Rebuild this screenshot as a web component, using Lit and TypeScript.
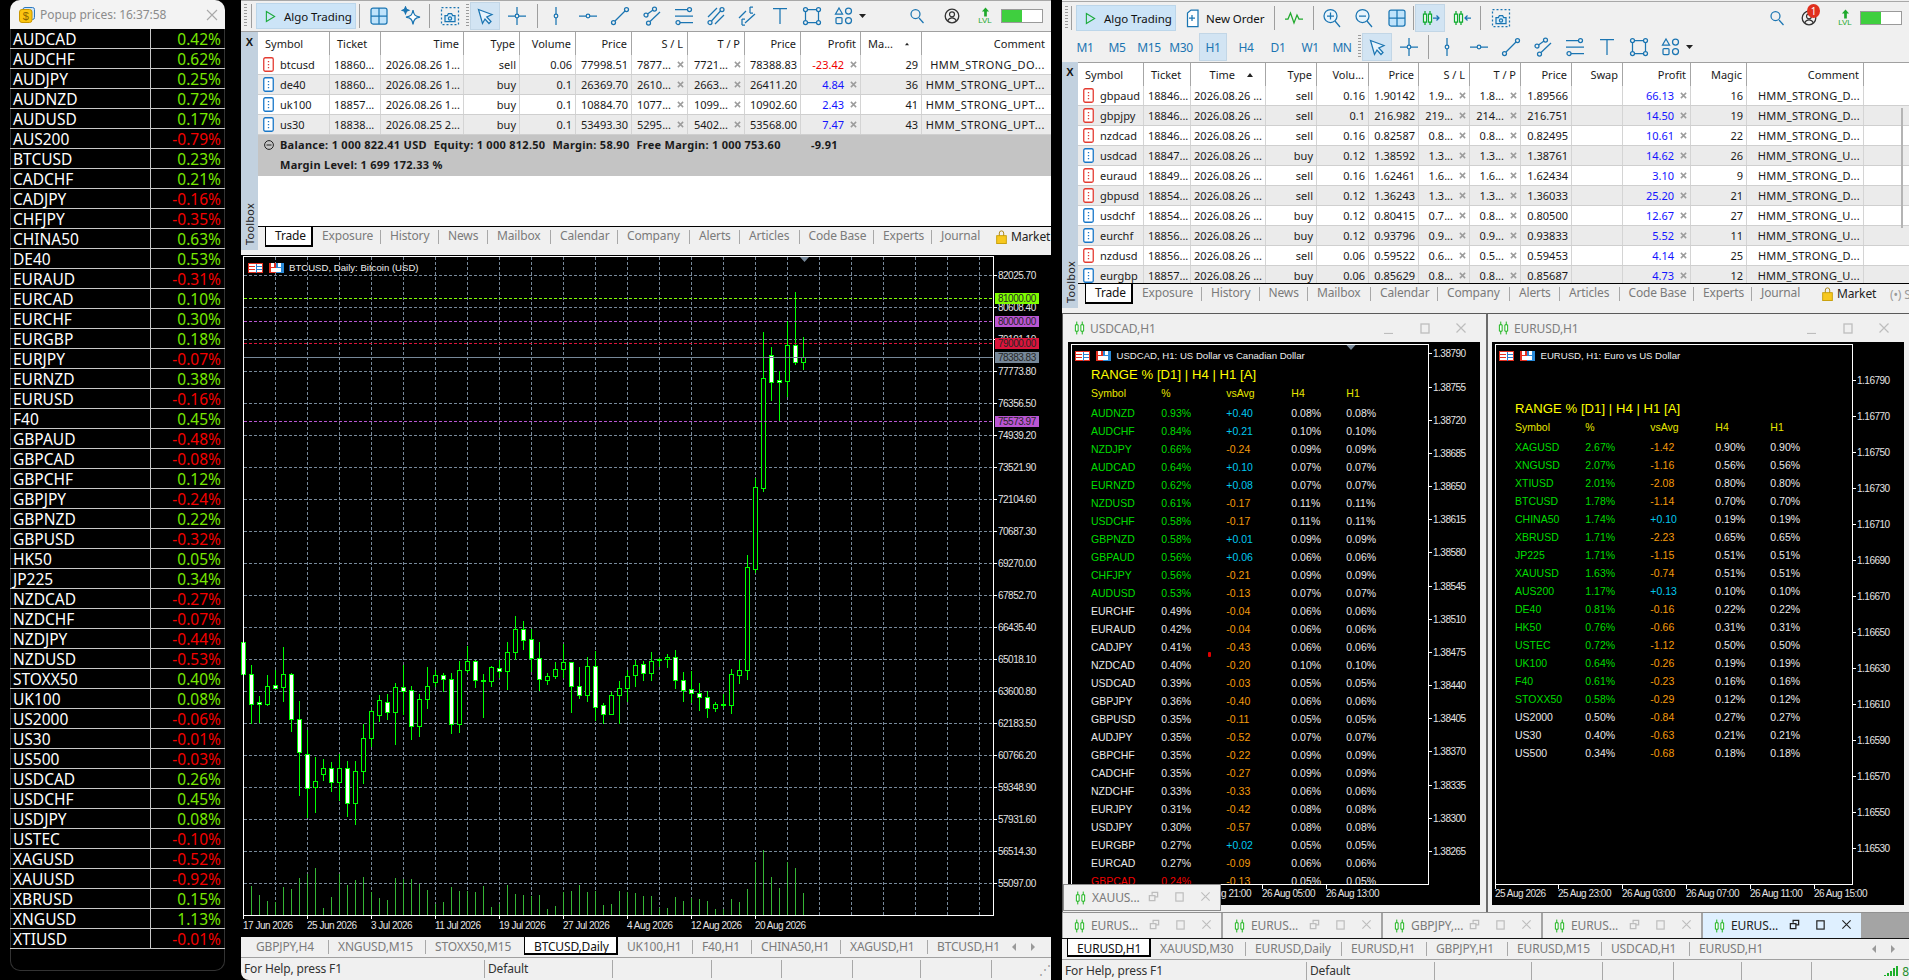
import { LitElement, html, svg, css, nothing } from "lit";
import { customElement } from "lit/decorators.js";

type Row = string[];
const popup: [string, string][] = ([
  ["AUDCAD","0.42"],["AUDCHF","0.62"],["AUDJPY","0.25"],["AUDNZD","0.72"],["AUDUSD","0.17"],["AUS200","-0.79"],["BTCUSD","0.23"],["CADCHF","0.21"],["CADJPY","-0.16"],["CHFJPY","-0.35"],["CHINA50","0.63"],["DE40","0.53"],["EURAUD","-0.31"],["EURCAD","0.10"],["EURCHF","0.30"],["EURGBP","0.18"],["EURJPY","-0.07"],["EURNZD","0.38"],["EURUSD","-0.16"],["F40","0.45"],["GBPAUD","-0.48"],["GBPCAD","-0.08"],["GBPCHF","0.12"],["GBPJPY","-0.24"],["GBPNZD","0.22"],["GBPUSD","-0.32"],["HK50","0.05"],["JP225","0.34"],["NZDCAD","-0.27"],["NZDCHF","-0.07"],["NZDJPY","-0.44"],["NZDUSD","-0.53"],["STOXX50","0.40"],["UK100","0.08"],["US2000","-0.06"],["US30","-0.01"],["US500","-0.03"],["USDCAD","0.26"],["USDCHF","0.45"],["USDJPY","0.08"],["USTEC","-0.10"],["XAGUSD","-0.52"],["XAUUSD","-0.92"],["XBRUSD","0.15"],["XNGUSD","1.13"],["XTIUSD","-0.01"],
] as [string,string][]);

const leftRows: Row[] = [
  ["btcusd","18860...","2026.08.26 1...","sell","0.06","77998.51","7877...","7721...","78388.83","-23.42","29","HMM_STRONG_DO..."],
  ["de40","18860...","2026.08.26 1...","buy","0.1","26369.70","2610...","2663...","26411.20","4.84","36","HMM_STRONG_UPT..."],
  ["uk100","18857...","2026.08.26 1...","buy","0.1","10884.70","1077...","1099...","10902.60","2.43","41","HMM_STRONG_UPT..."],
  ["us30","18838...","2026.08.25 2...","buy","0.1","53493.30","5295...","5402...","53568.00","7.47","43","HMM_STRONG_UPT..."],
];
const rightRows: Row[] = [
  ["gbpaud","18846...","sell","0.16","1.90142","1.9...","1.8...","1.89566","66.13","16","D"],
  ["gbpjpy","18846...","sell","0.1","216.982","219...","214...","216.751","14.50","19","D"],
  ["nzdcad","18846...","sell","0.16","0.82587","0.8...","0.8...","0.82495","10.61","22","D"],
  ["usdcad","18847...","buy","0.12","1.38592","1.3...","1.3...","1.38761","14.62","26","U"],
  ["euraud","18849...","sell","0.16","1.62461","1.6...","1.6...","1.62434","3.10","9","D"],
  ["gbpusd","18854...","sell","0.12","1.36243","1.3...","1.3...","1.36033","25.20","21","D"],
  ["usdchf","18854...","buy","0.12","0.80415","0.7...","0.8...","0.80500","12.67","27","U"],
  ["eurchf","18856...","buy","0.12","0.93796","0.9...","0.9...","0.93833","5.52","11","U"],
  ["nzdusd","18856...","sell","0.06","0.59522","0.6...","0.5...","0.59453","4.14","25","D"],
  ["eurgbp","18857...","buy","0.06","0.85629","0.8...","0.8...","0.85687","4.73","12","U"],
];

// wickTop, bodyTop, bodyBottom, wickBottom, white?  (crop units: page y = 610 + v / 3)
const candles: [number,number,number,number,number][] = [
[90,100,196,200,1],[168,196,286,344,1],[262,280,286,342,1],[198,232,286,290,0],[184,229,238,240,1],[114,196,235,278,0],[192,196,331,368,1],[276,331,430,560,1],[364,434,538,626,1],[444,517,535,612,0],[450,478,496,516,0],[460,478,520,548,1],[436,478,520,576,0],[456,478,583,624,1],[456,487,583,648,0],[344,388,487,525,0],[304,307,388,414,0],[258,274,319,340,0],[256,278,310,332,1],[222,235,310,408,0],[168,235,247,318,1],[232,244,352,392,1],[256,271,352,384,0],[174,232,271,300,0],[184,199,220,235,0],[192,199,211,250,1],[192,211,346,375,1],[156,184,346,372,0],[112,157,184,192,0],[154,157,214,236,1],[195,214,217,326,1],[172,175,217,234,0],[154,178,187,208,1],[98,130,187,244,0],[22,61,130,152,0],[36,61,94,122,1],[60,91,148,190,1],[98,148,211,246,1],[192,202,214,228,0],[160,181,202,210,0],[106,160,181,208,0],[160,160,232,312,1],[174,232,259,270,1],[144,172,259,278,0],[126,172,295,336,1],[282,289,316,344,1],[248,259,316,318,0],[216,238,259,344,0],[182,202,238,278,0],[152,169,199,234,0],[156,166,193,216,1],[128,157,193,216,0],[148,151,154,174,1],[136,145,151,178,0],[124,145,214,240,1],[190,214,244,278,1],[186,241,253,282,1],[222,253,265,306,1],[246,265,298,326,1],[280,286,298,308,0],[256,286,289,298,1],[180,196,289,314,0],[154,184,199,224,0],
[-162,-126,184,214,0],[-393,-366,-120,-108,0],[-831,-693,-363,-351,0],[-786,-761,-680,-624,1],[-714,-687,-681,-564,1],[-864,-792,-685,-636,0],[-952,-792,-742,-732,1],[-816,-756,-741,-716,0],
];
const volumes = [832,858,876,880,835,840,808,796,778,897,864,796,828,813,805,848,867,873,808,811,811,824,843,885,880,834,846,846,849,832,894,885,828,855,858,861,858,900,891,849,846,828,849,846,888,885,846,849,852,861,861,897,897,864,876,867,870,876,900,900,870,880,840,760,724,804,837,758,777,852];

const rangeA: string[][] = `AUDNZD 0.93 +0.40 0.08 g
AUDCHF 0.84 +0.21 0.10 g
NZDJPY 0.66 -0.24 0.09 g
AUDCAD 0.64 +0.10 0.07 g
EURNZD 0.62 +0.08 0.07 g
NZDUSD 0.61 -0.17 0.11 g
USDCHF 0.58 -0.17 0.11 g
GBPNZD 0.58 +0.01 0.09 g
GBPAUD 0.56 +0.06 0.06 g
CHFJPY 0.56 -0.21 0.09 g
AUDUSD 0.53 -0.13 0.07 g
EURCHF 0.49 -0.04 0.06 w
EURAUD 0.42 -0.04 0.06 w
CADJPY 0.41 -0.43 0.06 w
NZDCAD 0.40 -0.20 0.10 w
USDCAD 0.39 -0.03 0.05 w
GBPJPY 0.36 -0.40 0.06 w
GBPUSD 0.35 -0.11 0.05 w
AUDJPY 0.35 -0.52 0.07 w
GBPCHF 0.35 -0.22 0.09 w
CADCHF 0.35 -0.27 0.09 w
NZDCHF 0.33 -0.33 0.06 w
EURJPY 0.31 -0.42 0.08 w
USDJPY 0.30 -0.57 0.08 w
EURGBP 0.27 +0.02 0.05 w
EURCAD 0.27 -0.09 0.06 w
GBPCAD 0.24 -0.13 0.05 r`.split("\n").map((s) => s.split(" "));
const rangeB: string[][] = `XAGUSD 2.67 -1.42 0.90 g
XNGUSD 2.07 -1.16 0.56 g
XTIUSD 2.01 -2.08 0.80 g
BTCUSD 1.78 -1.14 0.70 g
CHINA50 1.74 +0.10 0.19 g
XBRUSD 1.71 -2.23 0.65 g
JP225 1.71 -1.15 0.51 g
XAUUSD 1.63 -0.74 0.51 g
AUS200 1.17 +0.13 0.10 g
DE40 0.81 -0.16 0.22 g
HK50 0.76 -0.66 0.31 g
USTEC 0.72 -1.12 0.50 g
UK100 0.64 -0.26 0.19 g
F40 0.61 -0.23 0.16 g
STOXX50 0.58 -0.29 0.12 g
US2000 0.50 -0.84 0.27 w
US30 0.40 -0.63 0.21 w
US500 0.34 -0.68 0.18 w`.split("\n").map((s) => s.split(" "));

const dot = (cx: number, cy: number, r = 2) => svg`<circle cx=${cx} cy=${cy} r=${r} fill="none"/>`;
const paths = (d: string) => svg`<path d=${d} fill="none"/>`;
const icons: Record<string, unknown> = {
  grid: svg`<rect x="2" y="2" width="16" height="16" rx="2" fill="#bfe3fb"/>${paths("M10 2v16M2 10h16")}`,
  spark: svg`<path d="M12 4C12.8 9 14 10.4 19 11.2 14 12 12.8 13.4 12 18.5 11.2 13.4 10 12 5 11.2 10 10.4 11.2 9 12 4Z" fill="#fff"/><path d="M4.5 1l1 2.3 2.3 1-2.3 1-1 2.3-1-2.3-2.3-1 2.3-1z" fill="currentColor"/>`,
  camera: svg`<rect x="1.5" y="1.5" width="17" height="17" fill="none" stroke-dasharray="2 2"/><path d="M5 9.5h2.4l1-2h3.2l1 2H15v6H5z" fill="#d9effc"/>${dot(10, 12.5, 1.6)}`,
  arrow: svg`<path d="M3.5 3.5L17 8.5 11.8 11 16 15.5 14 17.5 10 13 7.5 17.5z" fill="#e8f4fc"/>`,
  cross: svg`${dot(10, 10, 1.8)}${paths("M10 1v7M10 12v7M1 10h7M12 10h7")}`,
  vline: svg`${dot(10, 10, 1.8)}${paths("M10 1v7M10 12v7")}`,
  hline: svg`${dot(10, 10, 1.8)}${paths("M1 10h7M12 10h7")}`,
  trend: svg`${dot(3.5, 16.5)}${dot(16.5, 3.5)}${paths("M5 15L15 5")}`,
  chan: svg`${dot(12.5, 3)}${dot(4, 9)}${paths("M5.5 8L11 4")}${dot(6.5, 17)}${paths("M8 15.5L18 6")}`,
  fib: svg`${dot(15.5, 3.5)}${dot(4, 16.5)}${paths("M1 3.5h12.5M1 10h18M6 16.5h13")}`,
  par: svg`${dot(16, 3.5)}${dot(4, 16.5)}${paths("M14.5 5L5.5 15M2 11L11 2M9 18L18 9")}`,
  equi: svg`${paths("M1 12L8 5M7 17L17 8M12 1v6M15 1h-3M15 7h-3M4 13v6M7 13H4M7 19H4")}`,
  text: svg`${paths("M3 2.5h14M10 2.5V18")}`,
  rect: svg`${dot(3.5, 3.5)}${dot(16.5, 3.5)}${dot(3.5, 16.5)}${dot(16.5, 16.5)}${paths("M5.5 3.5h9M5.5 16.5h9M3.5 5.5v9M16.5 5.5v9")}`,
  shapes: svg`${paths("M5 2L8.5 8h-7z")}${dot(14.5, 5, 3)}<rect x="2" y="11.5" width="6" height="6" rx="1" fill="none"/>${dot(14.5, 14.5, 3)}`,
  search: svg`${dot(8.5, 8, 4.5)}${paths("M12 12l4.5 5")}`,
  zin: svg`<circle cx="8.5" cy="8" r="6.5" fill="#e8f4fc"/>${paths("M13 13l5 6M5 8h7M8.5 4.5v7")}`,
  zout: svg`<circle cx="8.5" cy="8" r="6.5" fill="#e8f4fc"/>${paths("M13 13l5 6M5 8h7")}`,
  neworder: svg`<path d="M4.5 5V18.5H15V2H8z" fill="#fff"/>${paths("M6 10h6M9 7v6")}`,
  wave: svg`<path d="M1 11h3l2.500-6 3.500 10 3-8 2 4h4"/>`,
  shiftr: svg`<path d="M5 3v14M10 3v14" stroke="#0eaa2d"/><path d="M3.500 6h3v8h-3zM8.500 6h3v8h-3z" fill="#fff" stroke="#0eaa2d"/><path d="M13 10h6M16.500 7.500L19 10l-2.500 2.500"/>`,
  shiftl: svg`<path d="M3 3v14M8 3v14" stroke="#0eaa2d"/><path d="M1.500 6h3v8h-3zM6.500 6h3v8h-3z" fill="#fff" stroke="#0eaa2d"/><path d="M18 10h-6M14.500 7.500L12 10l2.500 2.500"/>`,
};
const icon = (name: string) => html`<svg class="g" viewBox="0 0 20 20">${icons[name]}</svg>`;
const cell = (name: string, cls = "") => html`<span class="ic ${cls}">${icon(name)}</span>`;
const grip = html`<span class="grip"></span>`;
const dd = html`<svg class="dd" viewBox="0 0 7 4"><path d="M0 0h7L3.5 4z" fill="#222"/></svg>`;
const play = html`<svg class="play" viewBox="0 0 12 14"><path d="M1.5 1.5L10.5 7 1.5 12.5z" fill="none" stroke="#1cab3c" stroke-width="1.2"/></svg>`;
const candleIcon = html`<svg class="cdl" viewBox="0 0 12 14"><path d="M3 0v14M9 0v14" stroke="#0db00d"/><path d="M1.5 3.5h3v7h-3zM7.5 3.5h3v7h-3z" fill="#fff" stroke="#0db00d"/></svg>`;
const xMark = html`<svg class="xm" viewBox="0 0 8 8"><path d="M1 1l6 6M7 1L1 7" stroke="#9c9c9c" stroke-width="1.7"/></svg>`;
const lock = html`<svg class="lock" viewBox="0 0 12 16"><path d="M3.5 7V3.5a2.5 2.5 0 015 0V7" fill="none" stroke="#a57c00"/><rect x=".5" y="6.5" width="11" height="9" fill="#f7c81e" stroke="#c49a00"/></svg>`;
const lvl = (cls: string) => html`<span class="lvl ${cls}"><svg viewBox="0 0 10 10"><path d="M5 0l4 4.5H6.5V10h-3V4.5H1z" fill="#1fa92c"/></svg><b>LVL</b></span>`;
const toggle = (cls: string) => html`<span class="toggle ${cls}"><i></i></span>`;
const userIcon = html`<svg class="user" viewBox="0 0 16 16"><circle cx="8" cy="8" r="6.8" fill="none" stroke="#333" stroke-width="1.3"/><circle cx="8" cy="6.3" r="2.5" fill="none" stroke="#333" stroke-width="1.2"/><path d="M3.6 13c1-2.6 2.6-3.2 4.4-3.2s3.400.6 4.400 3.200" fill="none" stroke="#333" stroke-width="1.2"/></svg>`;

@customElement("app-root")
export class AppRoot extends LitElement {
  static styles = css`
    :host { display:block; width:1909px; height:980px; background:#000; overflow:hidden; font-family:"Noto Sans","Open Sans",sans-serif; font-size:11px; color:#1a1a1a; }
    svg { display:block; }
    .root { display:flex; height:980px; }

    .popup { width:215px; height:971px; margin:0 16px 0 10px; box-sizing:border-box; border:1px solid #333; border-top:0; border-radius:10px; flex:none; }
    .ptitle { height:29px; margin:0 -1px; background:#f3f3f3; border-radius:10px 10px 0 0; display:flex; align-items:center; color:#8b8b8b; font-size:12px; letter-spacing:-.05px; }
    .coin { width:16px; height:16px; margin:0 5px 0 9px; flex:none; }
    .coin text { font-size:11px; fill:#8a6400; }
    .ptitle span { flex:1; }
    .pclose { width:14px; height:14px; margin-right:6px; }
    .prow { display:grid; grid-template-columns:141px 1fr; height:20px; box-sizing:border-box; border-bottom:1px solid #c8c8c8; font-size:15.5px; line-height:21px; color:#fff; margin:0 -1px; }
    .prow div:first-child { padding-left:3px; border-right:1px solid #c8c8c8; height:19px; }
    .prow div:last-child { text-align:right; padding-right:4px; height:19px; }
    .prow .up { color:#76e800; }
    .prow .down { color:#f40000; }

    .term { background:#f0f0f0; display:flex; flex-direction:column; height:980px; flex:none; overflow:hidden; }
    .tl { width:810px; margin-right:11px; border-radius:0 0 0 8px; }
    .tr { width:847px; }
    .bar { display:flex; align-items:center; flex:none; color:#1b75b2; box-sizing:border-box; }
    .bar.tb { height:32px; border-top:1px solid #a8a8a8; border-bottom:1px solid #a0a0a0; }
    .bar.b1 { height:31px; border-top:1px solid #a8a8a8; margin-top:1px; padding-top:2px; }
    .bar.b2 { height:30px; padding-left:7px; }
    .ic { width:32px; height:28px; display:flex; align-items:center; justify-content:center; flex:none; box-sizing:border-box; }
    .ic.on { background:#d2e4f3; border:1px solid #c2d6e6; width:30px; margin:0 1px; }
    .ic.wide { width:38px; color:#1fa92c; }
    .ic.w34 { width:34px; }
    .g { width:20px; height:20px; stroke:currentColor; stroke-width:1.25; fill:none; }
    .sep { width:1px; height:24px; background:#9e9e9e; flex:none; }
    .grip { width:3px; height:24px; flex:none; background-image:repeating-linear-gradient(#9a9a9a 0 1px, transparent 1px 3px); }
    .dd { width:7px; height:4px; flex:none; margin-left:-1px; }
    .btn { height:26px; display:flex; align-items:center; color:#111; font-size:11.5px; letter-spacing:-.05px; flex:none; box-sizing:border-box; white-space:nowrap; }
    .btn.algo { background:#cce4f7; border:1px solid #bcd6ea; width:100px; gap:8px; padding-left:8px; }
    .btn.no { margin-left:-3px; }
    .play { width:11px; height:13px; flex:none; }
    .grow { flex:1; }
    .user { width:16px; height:16px; }
    .lvl { width:22px; display:flex; flex-direction:column; align-items:center; color:#1fa92c; flex:none; }
    .lvl svg { width:9px; height:10px; }
    .lvl b { font:400 8px/8px "Liberation Sans",sans-serif; }
    .toggle { width:42px; height:14px; border:1px solid #9a9a9a; background:#fff; box-sizing:border-box; flex:none; display:block; margin-right:8px; }
    .toggle.r7 { margin-right:7px; }
    .toggle i { display:block; width:50%; height:100%; background:#3fcf3f; }
    .badge { position:absolute; left:6px; top:-6px; width:13px; height:14px; border-radius:50%; background:#e0301e; color:#fff; font-size:10px; line-height:14px; text-align:center; }
    .userwrap { position:relative; width:16px; height:16px; flex:none; }
    .per { font-size:12px; letter-spacing:-.4px; }
    .per.on { width:28px; margin:0 3px 0 2px; }

    .m1 { margin-left:1px; } .m2 { margin-left:2px; } .m3 { margin-left:3px; } .m4 { margin-left:4px; } .m5 { margin-left:5px; } .m8 { margin-left:8px; } .m10 { margin-left:10px; } .m11 { margin-left:11px; } .m14 { margin-left:14px; } .m17 { margin-left:17px; }

    .dock { display:flex; flex:none; }
    .tl .dock { height:223px; }
    .tr .dock { height:251px; }
    .strip { width:17px; background:#c2d1df; flex:none; margin-bottom:5px; display:flex; flex-direction:column; justify-content:space-between; align-items:center; }
    .tr .strip { width:16px; }
    .strip b { font:700 11px/12px "Liberation Sans",sans-serif; color:#111; margin-top:4px; }
    .strip span { writing-mode:vertical-rl; transform:rotate(180deg); font-size:11px; letter-spacing:.2px; color:#222; margin-bottom:5px; line-height:11px; }
    .panel { flex:1; min-width:0; display:flex; flex-direction:column; }
    .area { flex:1; min-height:0; background:#fff; overflow:hidden; position:relative; }
    .tr .area { border-top:1px solid #a0a0a0; }

    .row { display:grid; height:20px; box-sizing:border-box; align-items:stretch; line-height:19px; }
    .lt { grid-template-columns:72px 51px 83px 56px 56px 56px 56px 57px 56px 60px 61px 127px; }
    .rt { grid-template-columns:66px 47px 75px 51px 52px 50px 51px 51px 51px 51px 68px 56px 117px; }
    .hd { height:23px; line-height:22px; border-bottom:0; }
    .body { border-bottom:1px solid #cfcfcf; }
    .body.alt { background:#ebebeb; }
    .c { border-right:1px solid #d4d4d4; text-align:right; padding:0 3px; white-space:nowrap; overflow:hidden; display:flex; justify-content:flex-end; align-items:center; box-sizing:border-box; }
    .hd .c { border-right-color:#a6a6a6; padding-right:4px; }
    .c.l { justify-content:flex-start; padding-left:4px; }
    .hd .c.l { padding-left:7px; }
    .c.sym { justify-content:flex-start; padding-left:5px; gap:6px; }
    .c.nb { border:0; }
    .c.cm { letter-spacing:.5px; padding-right:4px; }
    .rt .c.cm { letter-spacing:.25px; padding-right:3px; }
    .tk { width:11px; height:15px; flex:none; }
    .xm { width:7px; height:7px; flex:none; margin:0 3px 0 6px; }
    .c.px { padding-right:0; }
    .c .arr { width:6px; height:4px; margin:0 8px 0 12px; }
    .profit { color:#1414ff; }
    .neg { color:#f00000; }
    .scroll { position:absolute; left:823px; top:45px; width:2px; height:120px; background:#b4b4b4; }

    .sum { background:#c4c4c4; height:41px; font-weight:700; line-height:20px; position:relative; letter-spacing:.28px; }
    .sum div { display:flex; height:20px; padding-left:22px; white-space:nowrap; }
    .sum span { margin-right:7px; }
    .sum svg { position:absolute; left:6px; top:5px; width:10px; height:10px; }
    .sum .tot { position:absolute; left:553px; top:0; }

    .tabs { display:flex; height:20px; flex:none; position:relative; color:#7b7b7b; font-size:12px; line-height:18px; letter-spacing:-.15px; }
    .dock .tabs { border-top:1px solid #000; margin-bottom:9px; padding-left:7px; }
    .tl .dock .tabs { height:20px; margin-bottom:8px; }
    .tab { box-sizing:border-box; flex:none; padding-left:9px; white-space:nowrap; position:relative; }
    .tab.sp::after { content:""; position:absolute; right:0; top:3px; bottom:3px; width:1px; background:#a8a8a8; }
    .tab.act { color:#111; background:#fff; border:1px solid #000; border-width:0 2px 2px 1px; height:20px; }
    .bt { height:20px; border-bottom:1px solid #a0a0a0; box-sizing:content-box; line-height:18px; }
    .bt .tab.act { border-width:1px 2px 2px 1px; height:19px; margin-top:-1px; box-sizing:border-box; }
    .bt .tab { padding-top:1px; }
    .bt.p6 { padding-left:6px; }
    .bt.p5 { padding-left:5px; }
    .arrows { position:absolute; display:flex; gap:15px; top:6px; }
    .arrows.a1 { left:771px; }
    .arrows.a2 { left:810px; }
    .arrows svg { width:4px; height:8px; }
    .market { position:absolute; top:3px; display:flex; align-items:center; gap:4px; color:#222; line-height:14px; }
    .market.a1 { left:738px; }
    .market.a2 { left:744px; }
    .lock { width:11px; height:14px; }
    .signal { position:absolute; color:#9a9a9a; top:2px; left:812px; white-space:nowrap; }

    .status { height:21px; display:flex; flex:none; font-size:12px; line-height:20px; color:#333; letter-spacing:-.15px; }
    .st { box-sizing:border-box; padding-left:3px; border-right:1px solid #a8a8a8; margin-top:2px; height:18px; flex:none; line-height:17px; white-space:nowrap; }
    .st.last { border:0; flex:1; display:flex; justify-content:flex-end; gap:3px; align-items:center; }
    .corner { color:#999; }
    .eight { color:#1f8f2c; }

    .mdi { flex:none; height:625px; display:flex; flex-direction:column; position:relative; }
    .wins { height:599px; display:flex; flex:none; }
    .win { border-top:1px solid #5a5a5a; border-left:1px solid #5a5a5a; box-sizing:border-box; padding-left:5px; flex:none; height:599px; background:#f0f0f0; width:424px; }
    .win + .win { width:423px; border-left:2px solid #6a6a6a; padding-left:4px; }
    .wt { height:28px; display:flex; align-items:center; font-size:12px; color:#7f7f7f; position:relative; gap:5px; padding-left:6px; letter-spacing:-.1px; }
    .cdl { width:11px; height:14px; flex:none; }
    .wb { width:12px; height:12px; flex:none; }
    .wbs { position:absolute; right:19px; top:8px; display:flex; gap:24px; color:#bdbdbd; }
    .minrow { height:26px; display:flex; gap:2px; background:#a4a4a4; border-top:1px solid #909090; flex:none; box-sizing:border-box; padding-left:1px; }
    .mint { width:158px; height:25px; background:#f0f0f0; display:flex; align-items:center; padding-left:11px; gap:6px; box-sizing:border-box; font-size:12px; flex:none; position:relative; letter-spacing:-.1px; color:#7a7a7a; }
    .mint.act { background:#dff0ff; color:#222; }
    .mint.float { position:absolute; left:1px; top:571px; border:1px solid #8c8c8c; height:27px; }
    .mint .wbs { right:9px; top:6px; gap:15px; }
    .mint.act .wbs { color:#222; }
    .mint .wb { width:11px; height:11px; }
    .darkline { height:1px; background:#111; flex:none; }

    .chart { flex:none; background:#000; }
    text { font-family:"Liberation Sans",sans-serif; }
    .ax { font-size:10px; fill:#e4e4e4; letter-spacing:-.5px; }
    .ttl { font-size:9.6px; fill:#eee; }
    .lab { font-size:10px; fill:#262626; letter-spacing:-.5px; }
    .rh { font-size:13.1px; fill:#ffff00; letter-spacing:.05px; }
    .rc { font-size:10.5px; }
    .fg { fill:#00dd00; } .fw { fill:#e8e8e8; } .fr { fill:#f00000; } .fy { fill:#e6e600; } .fo { fill:#f59a0c; } .fc { fill:#00c8f0; }
  `;

  tabs(items: [string, number][], active: number) {
    return items.slice(0, -1).map(([t, x], i) => {
      const w = items[i + 1][1] - x;
      const next = i + 1 < items.length - 1;
      const sp = i !== active && i + 1 !== active && next;
      return html`<span class="tab ${i === active ? "act" : ""} ${sp ? "sp" : ""}" style="width:${w}px">${t}</span>`;
    });
  }

  tkIcon(side: string) {
    const c = side === "sell" ? "#e43c32" : "#1877c8";
    return html`<svg class="tk" viewBox="0 0 11 15"><rect x=".75" y=".75" width="9.5" height="13.500" rx="1.500" fill="#fff" stroke=${c} stroke-width="1.3"/><path d="M5.500 4v1.200M5.500 7v1.200M5.500 10v1.200" stroke=${c} stroke-width="1.300"/></svg>`;
  }

  leftTable() {
    const hd = ["Symbol","Ticket","Time","Type","Volume","Price","S / L","T / P","Price","Profit"];
    return html`
      <div class="row lt hd">
        ${hd.map((h, i) => html`<div class="c ${i < 2 ? "l" : ""}">${h}</div>`)}
        <div class="c l">Ma...<svg class="arr" viewBox="0 0 6 4"><path d="M0 4h6L3 0z" fill="#222"/></svg></div>
        <div class="c nb">Comment</div>
      </div>
      ${leftRows.map((r, i) => html`<div class="row lt body ${i % 2 ? "alt" : ""}">
        <div class="c sym">${this.tkIcon(r[3])}${r[0]}</div>
        <div class="c l">${r[1]}</div>
        ${r.slice(2, 6).map((t) => html`<div class="c">${t}</div>`)}
        <div class="c px">${r[6]}${xMark}</div>
        <div class="c px">${r[7]}${xMark}</div>
        <div class="c">${r[8]}</div>
        <div class="c px"><span class=${r[9].startsWith("-") ? "neg" : "profit"}>${r[9]}</span>${xMark}</div>
        <div class="c">${r[10]}</div>
        <div class="c nb cm">${r[11]}</div>
      </div>`)}
      <div class="sum">
        <svg viewBox="0 0 10 10"><circle cx="5" cy="5" r="4.400" fill="none" stroke="#222"/><path d="M2.500 5h5" stroke="#222"/></svg>
        <div><span>Balance: 1 000 822.41 USD</span><span>Equity: 1 000 812.50</span><span>Margin: 58.90</span><span>Free Margin: 1 000 753.60</span><span class="tot">-9.91</span></div>
        <div>Margin Level: 1 699 172.33 %</div>
      </div>`;
  }

  rightTable() {
    const hd = ["Symbol","Ticket","Time","Type","Volu...","Price","S / L","T / P","Price","Swap","Profit","Magic","Comment"];
    return html`
      <div class="row rt hd">
        ${hd.map((h, i) => i === 2
          ? html`<div class="c">${h}<svg class="arr" viewBox="0 0 6 4"><path d="M0 4h6L3 0z" fill="#222"/></svg></div>`
          : html`<div class="c ${i < 2 ? "l" : ""}">${h}</div>`)}
      </div>
      ${rightRows.map((r, i) => html`<div class="row rt body ${i % 2 ? "alt" : ""}">
        <div class="c sym">${this.tkIcon(r[2])}${r[0]}</div>
        <div class="c l">${r[1]}</div>
        <div class="c">2026.08.26 ...</div>
        <div class="c">${r[2]}</div>
        <div class="c">${r[3]}</div>
        <div class="c">${r[4]}</div>
        <div class="c px">${r[5]}${xMark}</div>
        <div class="c px">${r[6]}${xMark}</div>
        <div class="c">${r[7]}</div>
        <div class="c"></div>
        <div class="c px"><span class="profit">${r[8]}</span>${xMark}</div>
        <div class="c">${r[9]}</div>
        <div class="c cm">HMM_STRONG_${r[10]}...</div>
      </div>`)}
      <div class="scroll"></div>`;
  }

  titleIcons(x: number, y: number) {
    return svg`
      <g shape-rendering="crispEdges">
        <rect x=${x + .5} y=${y + .5} width="14" height="9" fill="#fff" stroke="#e53020"/>
        <path d="M${x + 1} ${y + 3.500}h6M${x + 1} ${y + 6.500}h6" stroke="#e53020"/>
        <path d="M${x + 8} ${y + 1}v9M${x + 8} ${y + 3.500}h6M${x + 8} ${y + 6.500}h6" stroke="#2a7fd0"/>
        <rect x=${x + 21} y=${y} width="7" height="10" fill="#e53020"/>
        <rect x=${x + 28} y=${y} width="8" height="10" fill="#2a8ad8"/>
        <rect x=${x + 23} y=${y} width="3" height="4" fill="#fff"/>
        <rect x=${x + 30} y=${y} width="3" height="4" fill="#fff"/>
        <rect x=${x + 23} y=${y + 5} width="10" height="4" fill="#fff"/>
      </g>`;
  }

  grid(xs: number[], ys: number[], x0: number, x1: number, y0: number, y1: number) {
    const d = ys.map((y) => `M${x0} ${y + .5}H${x1}`).join("") + xs.map((x) => `M${x + .5} ${y0}V${y1}`).join("");
    return svg`<path d=${d} stroke="#778899" stroke-dasharray="3 2" fill="none" shape-rendering="crispEdges"/>`;
  }

  btcChart() {
    const ys = Array.from({ length: 20 }, (_, i) => 276 + 32 * i);
    const xs = Array.from({ length: 23 }, (_, i) => 275 + 32 * i);
    const prices = ["82025.70","80608.40","79191.10","77773.80","76356.50","74939.20","73521.90","72104.60","70687.30","69270.00","67852.70","66435.40","65018.10","63600.80","62183.50","60766.20","59348.90","57931.60","56514.30","55097.00"];
    const dates = ["17 Jun 2026","25 Jun 2026","3 Jul 2026","11 Jul 2026","19 Jul 2026","27 Jul 2026","4 Aug 2026","12 Aug 2026","20 Aug 2026"];
    const levels: [number, string, string][] = [[299,"#7fff00","81000.00"],[322,"#ba55d3","80000.00"],[344,"#dc143c","79000.00"],[422,"#ba55d3","75573.97"]];
    const Y = (v: number) => Math.round(610 + v / 3);
    return html`<svg class="chart" width="810" height="682" viewBox="241 256 810 682">
      ${this.grid(xs, ys, 244, 993, 258, 916)}
      <g shape-rendering="crispEdges">
        ${volumes.map((v, i) => svg`<rect x=${251 + 8 * i} y=${Y(v)} width="1" height=${916 - Y(v)} fill="#35b535"/>`)}
        ${candles.map((c, i) => {
          const x = 243 + 8 * i;
          const t = Y(c[1]), b = Y(c[2]);
          return svg`<rect x=${x} y=${Y(c[0])} width="1" height=${Y(c[3]) - Y(c[0])} fill="#00ff00"/>
            <rect x=${x - 1.5} y=${t + .5} width="4" height=${Math.max(b - t, 1)} fill=${c[4] ? "#fff" : "#000"} stroke="#00ff00"/>`;
        })}
        ${levels.map(([y, c]) => svg`<path d="M244 ${y + .5}H993" stroke=${c} stroke-dasharray="3 2"/>`)}
        <rect x="244" y="358" width="749" height="1" fill="#778899"/>
        <rect x="243.500" y="257.500" width="750" height="658.500" fill="none" stroke="#fff"/>
        ${ys.map((y) => svg`<rect x="994" y=${y} width="3" height="1" fill="#fff"/>`)}
        ${[243, 307, 371, 435, 499, 563, 627, 691, 755].map((x) => svg`<rect x=${x} y="916" width="1" height="4" fill="#fff"/>`)}
      </g>
      <path d="M800 258h9l-4.500 5z" fill="#778899"/>
      ${this.titleIcons(248, 264)}
      <text class="ttl" x="289" y="272">BTCUSD, Daily:  Bitcoin (USD)</text>
      ${prices.map((p, i) => svg`<text class="ax" x="998" y=${ys[i] + 4}>${p}</text>`)}
      ${dates.map((d, i) => svg`<text class="ax" x=${243 + 64 * i} y="930">${d}</text>`)}
      ${levels.map(([y, c, t]) => svg`<rect x="995" y=${y - 5} width="44" height="11" fill=${c} shape-rendering="crispEdges"/><text class="lab" x="998" y=${y + 4}>${t}</text>`)}
      <rect x="995" y="353" width="44" height="11" fill="#778899" shape-rendering="crispEdges"/><text class="lab" x="998" y="362">78383.83</text>
    </svg>`;
  }

  rangeRows(data: string[][], x: number, y0: number) {
    const cols = [x, x + 70.300, x + 135.300, x + 200.300, x + 255.300];
    return svg`
      <text class="rc fy" x=${cols[0]} y=${y0 - 16}>Symbol</text>
      <text class="rc fy" x=${cols[1]} y=${y0 - 16}>%</text>
      <text class="rc fy" x=${cols[2]} y=${y0 - 16}>vsAvg</text>
      <text class="rc fy" x=${cols[3]} y=${y0 - 16}>H4</text>
      <text class="rc fy" x=${cols[4]} y=${y0 - 16}>H1</text>
      ${data.map((r, i) => {
        const y = y0 + 4 + i * 18;
        const c = r[4] === "g" ? "fg" : r[4] === "r" ? "fr" : "fw";
        return svg`
          <text class="rc ${c}" x=${cols[0]} y=${y}>${r[0]}</text>
          <text class="rc ${c}" x=${cols[1]} y=${y}>${r[1]}%</text>
          <text class="rc ${r[2].startsWith("+") ? "fc" : "fo"}" x=${cols[2]} y=${y}>${r[2]}</text>
          <text class="rc fw" x=${cols[3]} y=${y}>${r[3]}%</text>
          <text class="rc fw" x=${cols[4]} y=${y}>${r[3]}%</text>`;
      })}`;
  }

  subChart(o: { left: number; title: string; data: string[][]; rangeY: number; rowY: number; prices: [string, number][]; times: [string, number][]; tri?: number; dot?: boolean }) {
    const l = o.left;
    const fx = l + 3;
    const rx = fx + 357;
    return html`<svg class="chart" width="412" height="563" viewBox="${l} 342 412 563">
      ${this.titleIcons(fx + 4, 351)}
      <text class="ttl" x=${fx + 45.500} y="359">${o.title}</text>
      <text class="rh" x=${fx + 20} y=${o.rangeY + 5}>RANGE % [D1] | H4 | H1 [A]</text>
      ${this.rangeRows(o.data, fx + 20, o.rowY)}
      ${o.dot ? svg`<rect x="1208" y="652" width="3" height="5" rx="1" fill="#e00000"/>` : nothing}
      <rect x=${l} y="885" width="412" height="20" fill="#000"/>
      <g shape-rendering="crispEdges">
        <rect x=${fx + .5} y="344.500" width=${357} height="540" fill="none" stroke="#fff"/>
        ${o.prices.map(([, y]) => svg`<rect x=${rx + 1} y=${y} width="3" height="1" fill="#fff"/>`)}
        ${o.times.map(([, x]) => svg`<rect x=${x} y="885" width="1" height="4" fill="#fff"/>`)}
      </g>
      ${o.tri ? svg`<path d="M${o.tri - 4.500} 345h9l-4.500 5z" fill="#778899"/>` : nothing}
      ${o.prices.map(([p, y]) => svg`<text class="ax" x=${rx + 5} y=${y + 4}>${p}</text>`)}
      ${o.times.map(([t, x]) => svg`<text class="ax" x=${x} y="897">${t}</text>`)}
    </svg>`;
  }

  winBtns(n = 2) {
    return html`<span class="wbs">
      ${n === 3 ? html`<svg class="wb" viewBox="0 0 12 12"><path d="M4.500 4V1.500h6v5H8M1.500 5h6v5.500h-6z" fill="none" stroke="currentColor" stroke-width="1.400"/></svg>` : html`<svg class="wb" viewBox="0 0 12 12"><path d="M1 11.500h9" stroke="currentColor" stroke-width="1.200"/></svg>`}
      <svg class="wb" viewBox="0 0 12 12"><rect x="2" y="2" width="8" height="9" fill="none" stroke="currentColor" stroke-width="1.300"/></svg>
      <svg class="wb" viewBox="0 0 12 12"><path d="M1.500 1.500l9 9M10.500 1.500l-9 9" stroke="currentColor" stroke-width="1.200"/></svg>
    </span>`;
  }

  minTab(t: string, cls = "") {
    return html`<div class="mint ${cls}">${candleIcon}<span>${t}</span>${this.winBtns(3)}</div>`;
  }

  arrow(right: boolean) {
    return html`<svg viewBox="0 0 4 8"><path d=${right ? "M0 0l4 4-4 4z" : "M4 0L0 4l4 4z"} fill="#9a9a9a"/></svg>`;
  }

  status(w: number[], tail: unknown) {
    const labels = ["For Help, press F1", "Default"];
    return html`<div class="status">
      ${w.slice(0, -1).map((x, i) => html`<span class="st" style="width:${x}px">${labels[i] ?? ""}</span>`)}
      <span class="st last">${tail}</span>
    </div>`;
  }

  leftTerm() {
    const topTabs: [string, number][] = [["Trade",274],["Exposure",322],["History",390],["News",448],["Mailbox",497],["Calendar",560],["Company",627],["Alerts",699],["Articles",749],["Code Base",808.500],["Experts",883],["Journal",941],["",985]];
    const bottom: [string, number][] = [["GBPJPY,H4",256],["XNGUSD,M15",338],["STOXX50,M15",435],["BTCUSD,Daily",533],["UK100,H1",627],["F40,H1",702],["CHINA50,H1",761],["XAGUSD,H1",850],["BTCUSD,H1",937],["",1012]];
    return html`<div class="term tl">
      <div class="bar tb">
        <span class="grip m3"></span><span class="sep m4"></span>
        <div class="btn algo m4">${play}Algo Trading</div>
        <span class="sep m3"></span>
        ${cell("grid", "m3")}${cell("spark")}
        <span class="sep m2"></span>
        ${cell("camera", "m4")}${grip}
        ${cell("arrow", "on m3")}${cell("cross")}
        <span class="sep m4"></span>
        ${cell("vline", "m2")}${cell("hline")}${cell("trend")}${cell("chan")}${cell("fib")}${cell("par")}${cell("equi")}
        ${cell("text")}${cell("rect")}${cell("shapes")}${dd}
        <span class="grow"></span>
        ${cell("search")}
        <span class="userwrap m11">${userIcon}</span>
        ${lvl("m14")}
        ${toggle("m5")}
      </div>
      <div class="dock">
        <div class="strip"><b>X</b><span>Toolbox</span></div>
        <div class="panel">
          <div class="area">${this.leftTable()}</div>
          <div class="tabs">
            ${this.tabs(topTabs, 0)}
            <span class="market a1">${lock}Market</span>
          </div>
        </div>
      </div>
      ${this.btcChart()}
      <div class="tabs bt p6">
        ${this.tabs(bottom, 3)}
        <span class="arrows a1">${this.arrow(false)}${this.arrow(true)}</span>
      </div>
      ${this.status([244, 128, 99, 70, 71, 68, 71, 61], html`<span class="corner">⋰</span>`)}
    </div>`;
  }

  rightTerm() {
    const tabsTop: [string, number][] = [["Trade",1095],["Exposure",1143],["History",1212],["News",1269.500],["Mailbox",1318],["Calendar",1381],["Company",1448],["Alerts",1520],["Articles",1570],["Code Base",1629.500],["Experts",1704],["Journal",1762],["",1806]];
    const bottom: [string, number][] = [["EURUSD,H1",1077],["XAUUSD,M30",1161],["EURUSD,Daily",1256],["EURUSD,H1",1352],["GBPJPY,H1",1437],["EURUSD,M15",1518],["USDCAD,H1",1612],["EURUSD,H1",1700],["",1775]];
    const p1 = ["1.38790",353,"1.38755",387,"1.38720",420,"1.38685",453,"1.38650",486,"1.38615",519,"1.38580",552,"1.38545",586,"1.38510",619,"1.38475",652,"1.38440",685,"1.38405",718,"1.38370",751,"1.38335",785,"1.38300",818,"1.38265",851];
    const pr1: [string, number][] = [];
    for (let i = 0; i < p1.length; i += 2) pr1.push([p1[i] as string, p1[i + 1] as number]);
    const pr2: [string, number][] = ["1.16790","1.16770","1.16750","1.16730","1.16710","1.16690","1.16670","1.16650","1.16630","1.16610","1.16590","1.16570","1.16550","1.16530"].map((p, i) => [p, 380 + 36 * i]);
    return html`<div class="term tr">
      <div class="bar b1">
        <span class="grip m3"></span><span class="sep m3"></span>
        <div class="btn algo m4">${play}Algo Trading</div>
        ${cell("neworder", "m1")}<span class="btn no">New Order</span>
        <span class="sep m10"></span>
        <span class="ic wide">${icon("wave")}</span>
        <span class="sep"></span>
        ${cell("zin", "m2")}${cell("zout")}${cell("grid", "m1")}
        <span class="sep"></span>
        ${cell("shiftr", "on m5")}
        ${cell("shiftl", "w34")}
        <span class="sep"></span>
        ${cell("camera", "m4")}
        <span class="grow"></span>
        ${cell("search")}
        <span class="userwrap m8">${userIcon}<span class="badge">1</span></span>
        ${lvl("m17")}
        ${toggle("m4 r7")}
      </div>
      <div class="bar b2">
        ${["M1","M5","M15","M30","H1","H4","D1","W1","MN"].map((p, i) => html`<span class="ic per ${i === 4 ? "on" : ""}">${p}</span>`)}
        ${grip}
        ${cell("arrow", "on m4")}${cell("cross")}
        <span class="sep m3"></span>
        ${cell("vline", "m2")}${cell("hline")}${cell("trend")}${cell("chan")}${cell("fib")}${cell("text")}${cell("rect")}${cell("shapes")}${dd}
      </div>
      <div class="dock">
        <div class="strip"><b>X</b><span>Toolbox</span></div>
        <div class="panel">
          <div class="area">${this.rightTable()}</div>
          <div class="tabs">
            ${this.tabs(tabsTop, 0)}
            <span class="market a2">${lock}Market</span>
            <span class="signal">(•) S</span>
          </div>
        </div>
      </div>
      <div class="mdi">
        <div class="wins">
          <div class="win">
            <div class="wt">${candleIcon}USDCAD,H1 ${this.winBtns()}</div>
            ${this.subChart({ left: 1068, title: "USDCAD, H1:  US Dollar vs Canadian Dollar", data: rangeA, rangeY: 374, rowY: 413, prices: pr1, tri: 1351, dot: true,
              times: [["25 Aug 21:00",1198],["26 Aug 05:00",1262],["26 Aug 13:00",1326]] })}
          </div>
          <div class="win">
            <div class="wt">${candleIcon}EURUSD,H1 ${this.winBtns()}</div>
            ${this.subChart({ left: 1492, title: "EURUSD, H1:  Euro vs US Dollar", data: rangeB, rangeY: 408, rowY: 447, prices: pr2,
              times: [["25 Aug 2026",1495],["25 Aug 23:00",1558],["26 Aug 03:00",1622],["26 Aug 07:00",1686],["26 Aug 11:00",1750],["26 Aug 15:00",1814]] })}
          </div>
        </div>
        ${this.minTab("XAUUS...", "float")}
        <div class="minrow">
          ${this.minTab("EURUS...")}${this.minTab("EURUS...")}${this.minTab("GBPJPY,...")}${this.minTab("EURUS...")}${this.minTab("EURUS...", "act")}
        </div>
      </div>
      <div class="darkline"></div>
      <div class="tabs bt p5">
        ${this.tabs(bottom, 0)}
        <span class="arrows a2">${this.arrow(false)}${this.arrow(true)}</span>
      </div>
      ${this.status([245, 128, 97, 71, 71, 68, 70, 66], html`<svg width="15" height="12" viewBox="0 0 15 12"><path d="M1 11v-1M4 11V8M7 11V6M10 11V3M13 11V1" stroke="#1faf2c" stroke-width="2"/></svg><span class="eight">8</span>`)}
    </div>`;
  }

  render() {
    return html`<div class="root">
      <div class="popup">
        <div class="ptitle">
          <svg class="coin" viewBox="0 0 16 16"><rect x="4" y="0.500" width="11.500" height="12" rx="2" fill="#cfe3f5" stroke="#2a78c0"/><rect x="0.500" y="2.500" width="12.500" height="13" rx="2.500" fill="#fbc511" stroke="#c89600"/><text x="6.700" y="13" text-anchor="middle">$</text></svg>
          <span>Popup prices: 16:37:58</span>
          <svg class="pclose" viewBox="0 0 14 14"><path d="M2 2l10 10M12 2L2 12" stroke="#a8a8a8" stroke-width="1.100"/></svg>
        </div>
        ${popup.map(([n, v]) => html`<div class="prow"><div>${n}</div><div class=${v.startsWith("-") ? "down" : "up"}>${v}%</div></div>`)}
      </div>
      ${this.leftTerm()}
      ${this.rightTerm()}
    </div>`;
  }
}
